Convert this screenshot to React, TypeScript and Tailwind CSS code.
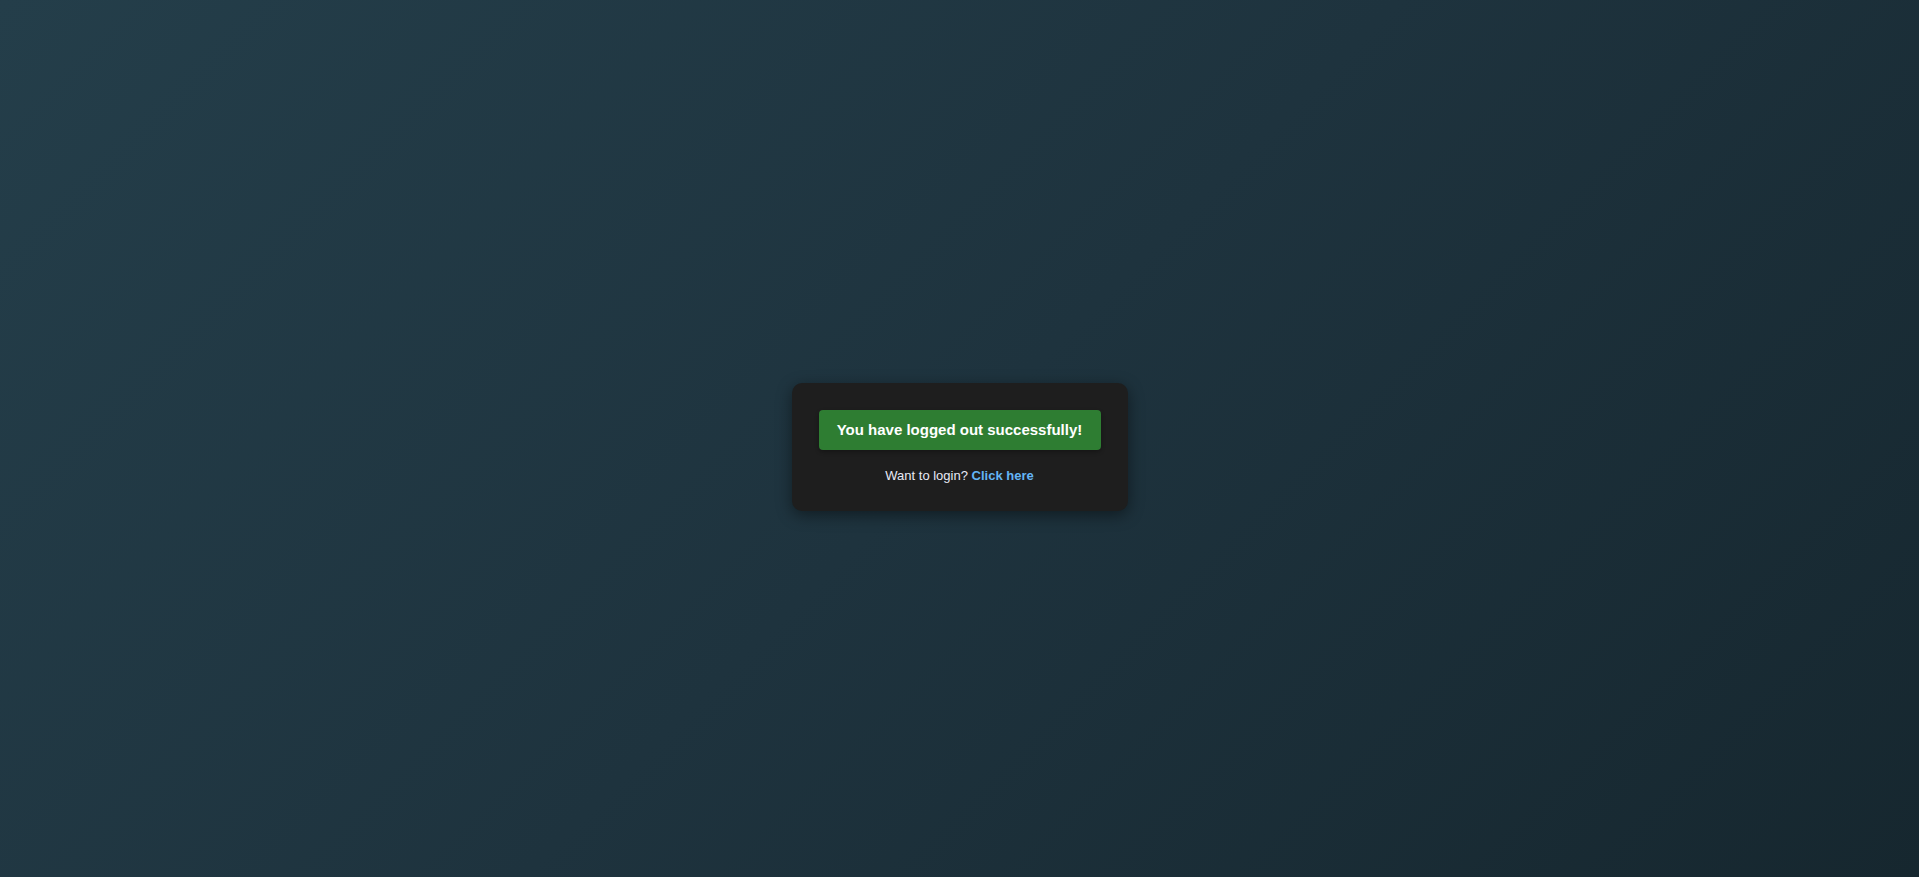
export default function App() {
  return (
    <div
      className="min-h-screen w-full flex items-center justify-center pt-[17px] bg-[linear-gradient(135deg,#243e4a_0%,#1e333e_50%,#16272f_100%)]"
      style={{ fontFamily: '"Liberation Sans", Arial, sans-serif' }}
    >
      <div className="w-[336px] rounded-[10px] bg-[#1e1e1e] px-[27px] pt-[27px] pb-[25px] shadow-[0_4px_16px_rgba(0,0,0,0.45)] flex flex-col items-center">
        <div className="w-full h-[40px] rounded-[4px] bg-[#2e7d32] flex items-center justify-center text-white font-bold text-[15px] shadow-[0_2px_4px_rgba(0,0,0,0.3)]">
          You have logged out successfully!
        </div>
        <p className="mt-[16px] text-[13px] leading-[20px] text-[#e8eaf6]">
          Want to login?{" "}
          <a href="#" className="font-bold text-[#64b5f6]">
            Click here
          </a>
        </p>
      </div>
    </div>
  );
}
